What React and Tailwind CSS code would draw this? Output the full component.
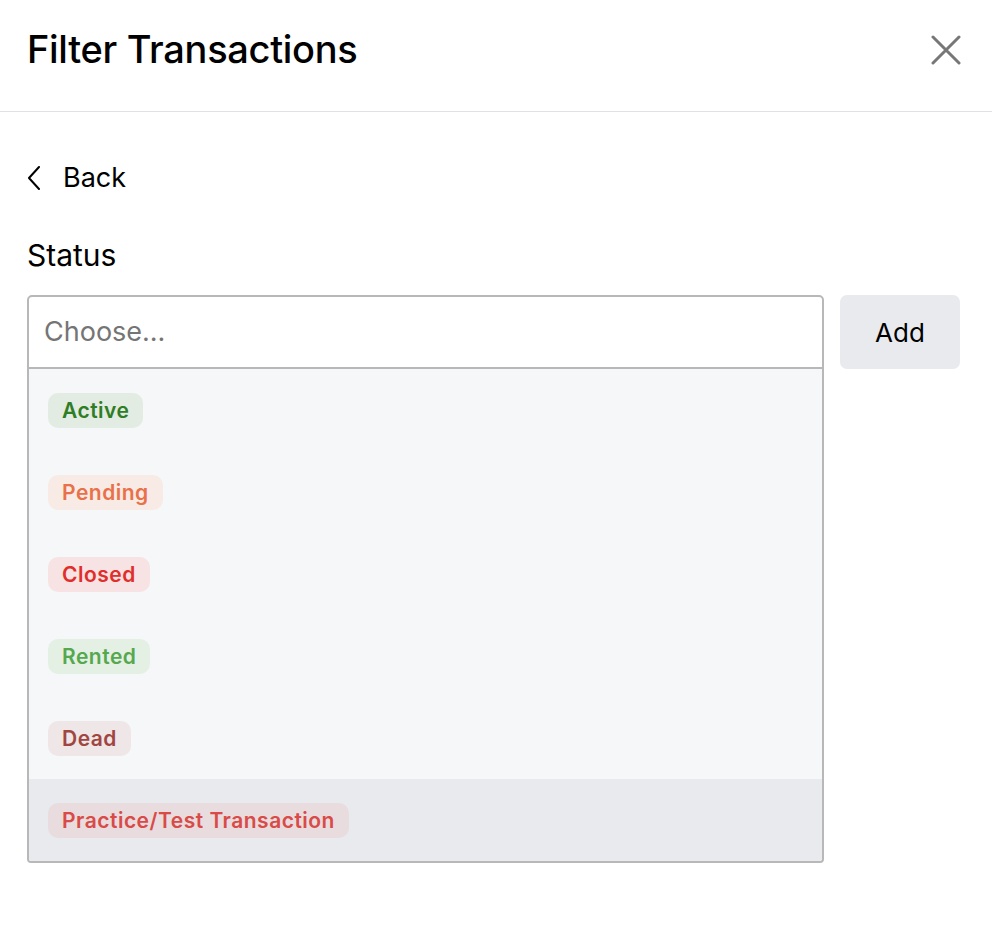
import React, { useState } from 'react';

const statuses = [
    { label: 'Active', text: 'text-[#2f7d24]', bg: 'bg-[#e3ece2]' },
    { label: 'Pending', text: 'text-[#e8714a]', bg: 'bg-[#f8ebe6]' },
    { label: 'Closed', text: 'text-[#e02f2a]', bg: 'bg-[#f8e3e4]' },
    { label: 'Rented', text: 'text-[#56a84f]', bg: 'bg-[#e5f0e5]' },
    { label: 'Dead', text: 'text-[#a14541]', bg: 'bg-[#eee6e7]' },
    { label: 'Practice/Test Transaction', text: 'text-[#d94b47]', bg: 'bg-[#e8dcdf]' },
];

export default function App() {
    const [hovered] = useState(5);

    return (
        <div className="min-h-screen bg-white text-black font-['Inter',sans-serif]">
            <div className="flex items-center justify-between h-[112px] pb-[12px] px-[27px] border-b border-[#dfe1e4]">
                <h1 className="text-[38px] font-medium tracking-[-0.3px]">Filter Transactions</h1>
                <button className="text-[#777777] mr-[4px]">
                    <svg width="30" height="30" viewBox="0 0 30 30" fill="none" stroke="currentColor" strokeWidth="3" strokeLinecap="round">
                        <path d="M2 2L28 28M28 2L2 28" />
                    </svg>
                </button>
            </div>

            <div className="px-[27px]">
                <div className="flex items-center h-[26px] mt-[53px] gap-[22px]">
                    <svg width="14" height="24" viewBox="0 0 14 24" fill="none" stroke="black" strokeWidth="2" strokeLinecap="round" strokeLinejoin="round">
                        <path d="M12 1L2 12L12 23" />
                    </svg>
                    <span className="text-[27px]">Back</span>
                </div>

                <div className="text-[30px] mt-[48px] leading-[32px]">Status</div>

                <div className="flex items-start gap-[16px] mt-[24px]">
                    <div className="w-[797px]">
                        <div className="h-[74px] border-2 border-[#b8b8b8] rounded-t-[5px] flex items-center px-[15px]">
                            <span className="text-[27px] text-[#757575]">Choose...</span>
                        </div>
                        <div className="border-2 border-t-0 border-[#b8b8b8] rounded-b-[4px] bg-[#f6f7f9] overflow-hidden">
                            {statuses.map((s, i) => (
                                <div key={s.label} className={`h-[82px] flex items-center px-[19px] ${i === hovered ? 'bg-[#e9eaee]' : ''}`}>
                                    <span className={`inline-block h-[35px] leading-[35px] px-[14px] rounded-[10px] text-[21px] font-semibold tracking-[0.5px] ${s.text} ${s.bg}`}>
                                        {s.label}
                                    </span>
                                </div>
                            ))}
                        </div>
                    </div>
                    <button className="w-[120px] h-[74px] rounded-[7px] bg-[#e9eaee] text-[26px]">Add</button>
                </div>
            </div>
        </div>
    );
}
